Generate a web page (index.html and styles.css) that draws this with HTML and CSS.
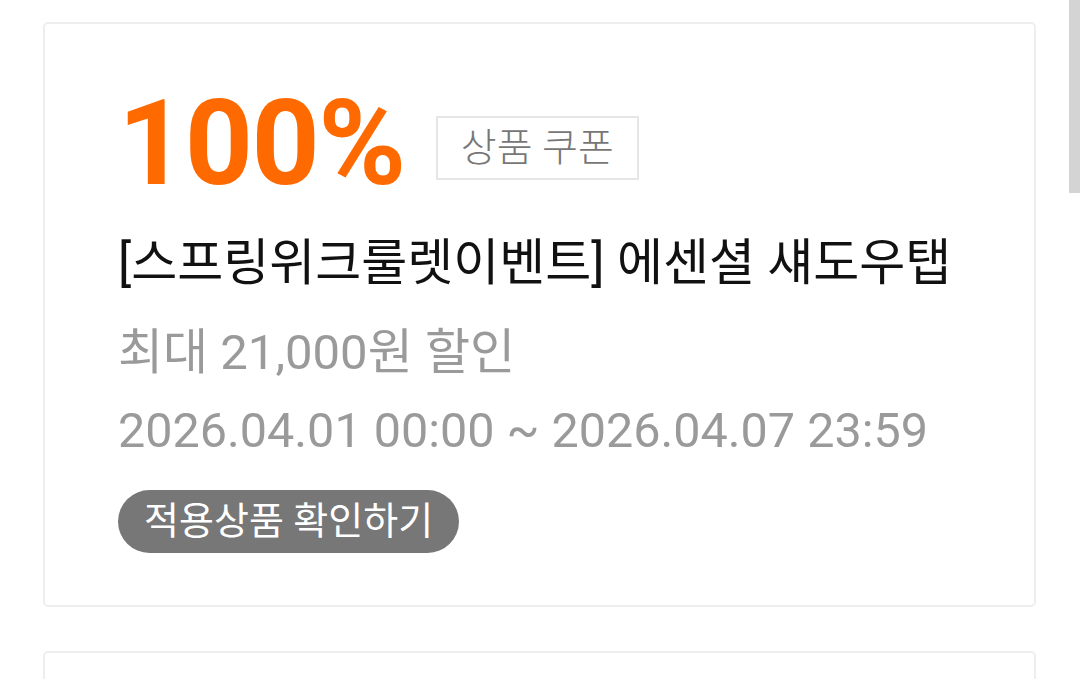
FILE: index.html
```html
<!DOCTYPE html>
<html lang="ko">
<head>
  <meta charset="UTF-8" />
  <meta name="viewport" content="width=device-width, initial-scale=1.0"/>
  <title>쿠폰</title>
  <link rel="stylesheet" href="styles.css">
</head>
<body>
  <div class="coupon-list">
    <div class="coupon">
      <div class="coupon-head">
        <span class="rate">100%</span>
        <span class="type">상품 쿠폰</span>
      </div>
      <div class="name">[스프링위크룰렛이벤트] 에센셜 섀도우탭</div>
      <div class="limit">최대 21,000원 할인</div>
      <div class="period">2026.04.01 00:00 ~ 2026.04.07 23:59</div>
      <button class="btn-items">적용상품 확인하기</button>
    </div>
    <div class="coupon"></div>
  </div>

  <div class="scroll-thumb"></div>
</body>
</html>
```

FILE: styles.css
```css
body {
  margin: 0;
  background: #ffffff;
  font-family: Roboto, "Noto Sans CJK KR", sans-serif;
  overflow: hidden;
}

.coupon-list {
  display: flex;
  flex-direction: column;
  gap: 44px;
  padding: 22px 44px 0 43px;
}

.coupon {
  border: 2px solid #eeeeee;
  border-radius: 5px;
  padding: 60px 40px 52px 73px;
  display: flex;
  flex-direction: column;
  align-items: flex-start;
  min-height: 200px;
}

.coupon-head {
  display: flex;
  align-items: center;
  gap: 31px;
}

.rate {
  font-size: 119px;
  font-weight: 700;
  color: #ff6a00;
  line-height: 1;
  letter-spacing: -1.5px;
}

.type {
  border: 2px solid #e6e6e6;
  padding: 8px 23px;
  font-size: 39px;
  font-weight: 300;
  color: #777777;
  line-height: 44px;
  margin-top: 8px;
}

.name {
  margin-top: 28px;
  font-size: 50px;
  color: #111111;
  line-height: 64px;
}

.limit {
  margin-top: 26px;
  font-size: 49px;
  color: #9a9a9a;
  line-height: 64px;
}

.period {
  margin-top: 14px;
  font-size: 48.5px;
  color: #9a9a9a;
  line-height: 64px;
}

.btn-items {
  margin-top: 27px;
  border: none;
  border-radius: 32px;
  background: #777777;
  color: #ffffff;
  font-family: inherit;
  font-size: 38px;
  line-height: 63px;
  padding: 0 26px;
}

.scroll-thumb {
  position: fixed;
  top: 0;
  right: 0;
  width: 11px;
  height: 193px;
  background: #d4d4d4;
}
```
